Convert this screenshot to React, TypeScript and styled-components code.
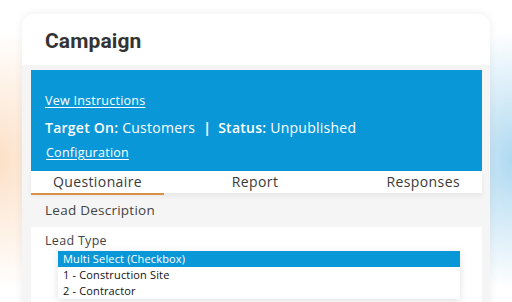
import React, {useState} from 'react';
import styled, {createGlobalStyle} from 'styled-components';

const GlobalStyle = createGlobalStyle`
  html, body {
    margin: 0;
    padding: 0;
    height: 100%;
    overflow: hidden;
  }
  body {
    font-family: "Open Sans", "Noto Sans", sans-serif;
    background:
      radial-gradient(ellipse 80px 130px at 0px 160px, rgba(252, 214, 180, 0.75), rgba(252, 214, 180, 0) 100%),
      radial-gradient(ellipse 80px 130px at 512px 160px, rgba(160, 210, 238, 0.85), rgba(160, 210, 238, 0) 100%),
      #ffffff;
  }
`;

const Page = styled.div`
  padding: 14px 22px 0;
`;

const Card = styled.div`
  background: #fff;
  border-radius: 12px;
  box-shadow: 0 0 10px rgba(0, 0, 0, 0.07);
  overflow: hidden;
  height: 300px;
  display: flex;
  flex-direction: column;
`;

const Header = styled.div`
  height: 51px;
  display: flex;
  align-items: center;
  padding: 2px 0 0 23px;
  box-sizing: border-box;
`;

const Title = styled.h1`
  margin: 0;
  font-family: Roboto, "Liberation Sans", sans-serif;
  font-size: 21px;
  font-weight: 700;
  letter-spacing: 0.1px;
  color: #333;
`;

const Body = styled.div`
  flex: 1;
  background: #f5f5f5;
  padding: 5px 8px 0 9px;
`;

const InfoPanel = styled.div`
  background: #0a97d8;
  height: 101px;
  box-sizing: border-box;
  padding: 23px 14px 0;
  display: flex;
  flex-direction: column;
  color: #fff;
`;

const PanelLink = styled.a<{ $indent?: number }>`
  font-size: 12.5px;
  line-height: 16px;
  letter-spacing: 0.25px;
  color: #fff;
  text-decoration: underline;
  text-underline-offset: 2px;
  margin-left: ${p => p.$indent || 0}px;
  cursor: pointer;
  align-self: flex-start;
`;

const InfoLine = styled.div`
  font-size: 14px;
  line-height: 20px;
  letter-spacing: 0.25px;
  margin: 9px 0 7px;
  white-space: nowrap;

  b {
    font-weight: 600;
  }
`;

const Divider = styled.span`
  font-weight: 700;
  margin: 0 7px 0 8px;
`;

const Tabs = styled.div`
  display: grid;
  grid-template-columns: 133px 182px 1fr;
  height: 22px;
  background: #fff;
  box-shadow: 0 3px 5px rgba(0, 0, 0, 0.06);
  position: relative;
`;

const Tab = styled.div<{ $active?: boolean; $align?: string }>`
  font-size: 14px;
  line-height: 22px;
  letter-spacing: 0.4px;
  color: #3a3a3a;
  text-align: ${p => p.$align || 'center'};
  padding-right: ${p => (p.$align === 'right' ? '22px' : '0')};
  border-bottom: 2px solid ${p => (p.$active ? '#d9914a' : 'transparent')};
  box-sizing: border-box;
  cursor: pointer;
`;

const SectionTitle = styled.div`
  font-size: 13.5px;
  line-height: 34px;
  letter-spacing: 0.25px;
  color: #444;
  padding-left: 14px;
`;

const FieldBox = styled.div`
  background: #fff;
  padding: 6px 22px 0 14px;
  height: 80px;
`;

const FieldLabel = styled.div`
  font-size: 12.5px;
  line-height: 16px;
  letter-spacing: 0.3px;
  color: #444;
  margin-bottom: 2px;
`;

const OptionList = styled.ul`
  list-style: none;
  margin: 0 0 0 13px;
  padding: 0;
  background: #fff;
  box-shadow: 0 2px 8px rgba(0, 0, 0, 0.12);
`;

const Option = styled.li<{ $selected?: boolean }>`
  height: 16px;
  line-height: 16px;
  padding-left: 5px;
  font-size: 11px;
  letter-spacing: 0.15px;
  color: ${p => (p.$selected ? '#fff' : '#111')};
  background: ${p => (p.$selected ? '#0a97d8' : 'transparent')};
  cursor: pointer;
`;

const options = ['Multi Select (Checkbox)', '1 - Construction Site', '2 - Contractor'];
const tabs = ['Questionaire', 'Report', 'Responses'];

export default function App() {
    const [tab, setTab] = useState('Questionaire');
    const [selected, setSelected] = useState(options[0]);
    return (
        <Page>
            <GlobalStyle/>
            <Card>
                <Header>
                    <Title>Campaign</Title>
                </Header>
                <Body>
                    <InfoPanel>
                        <PanelLink>Vew Instructions</PanelLink>
                        <InfoLine>
                            <b>Target On:</b> Customers<Divider>|</Divider><b>Status:</b> Unpublished
                        </InfoLine>
                        <PanelLink $indent={1}>Configuration</PanelLink>
                    </InfoPanel>
                    <Tabs>
                        {tabs.map((t, i) => (
                            <Tab
                                key={t}
                                $active={tab === t}
                                $align={i === 2 ? 'right' : 'center'}
                                onClick={() => setTab(t)}
                            >
                                {t}
                            </Tab>
                        ))}
                    </Tabs>
                    <SectionTitle>Lead Description</SectionTitle>
                    <FieldBox>
                        <FieldLabel>Lead Type</FieldLabel>
                        <OptionList>
                            {options.map(o => (
                                <Option key={o} $selected={selected === o} onClick={() => setSelected(o)}>
                                    {o}
                                </Option>
                            ))}
                        </OptionList>
                    </FieldBox>
                </Body>
            </Card>
        </Page>
    );
}
